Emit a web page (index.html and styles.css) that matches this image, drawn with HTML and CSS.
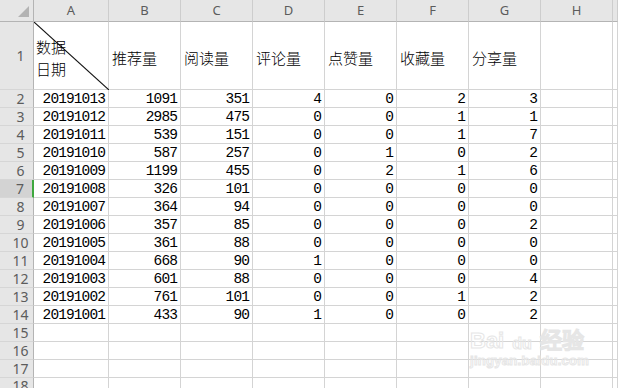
FILE: index.html
```html
<!DOCTYPE html>
<html lang="zh-CN">
<head>
<meta charset="utf-8">
<title>Sheet</title>
<link rel="stylesheet" href="styles.css">
</head>
<body>
<div class="sheet">
  <div class="corner"><span class="tri"></span></div>
  <div class="ch">A</div><div class="ch">B</div><div class="ch">C</div><div class="ch">D</div><div class="ch">E</div><div class="ch">F</div><div class="ch">G</div><div class="ch">H</div><div class="ch"></div>

  <div class="rh tall">1</div>
  <div class="c title diag">
    <svg class="diagline" viewBox="0 0 75 68" preserveAspectRatio="none"><line x1="0" y1="0" x2="75" y2="68" stroke="#111" stroke-width="1.1"/></svg>
    <span class="two">数据<br>日期</span>
  </div>
  <div class="c title">推荐量</div><div class="c title">阅读量</div><div class="c title">评论量</div><div class="c title">点赞量</div><div class="c title">收藏量</div><div class="c title">分享量</div><div class="c title"></div><div class="c title"></div>

  <div class="rh">2</div><div class="c n">20191013</div><div class="c n">1091</div><div class="c n">351</div><div class="c n">4</div><div class="c n">0</div><div class="c n">2</div><div class="c n">3</div><div class="c"></div><div class="c"></div>
  <div class="rh">3</div><div class="c n">20191012</div><div class="c n">2985</div><div class="c n">475</div><div class="c n">0</div><div class="c n">0</div><div class="c n">1</div><div class="c n">1</div><div class="c"></div><div class="c"></div>
  <div class="rh">4</div><div class="c n">20191011</div><div class="c n">539</div><div class="c n">151</div><div class="c n">0</div><div class="c n">0</div><div class="c n">1</div><div class="c n">7</div><div class="c"></div><div class="c"></div>
  <div class="rh">5</div><div class="c n">20191010</div><div class="c n">587</div><div class="c n">257</div><div class="c n">0</div><div class="c n">1</div><div class="c n">0</div><div class="c n">2</div><div class="c"></div><div class="c"></div>
  <div class="rh">6</div><div class="c n">20191009</div><div class="c n">1199</div><div class="c n">455</div><div class="c n">0</div><div class="c n">2</div><div class="c n">1</div><div class="c n">6</div><div class="c"></div><div class="c"></div>
  <div class="rh sel">7</div><div class="c n">20191008</div><div class="c n">326</div><div class="c n">101</div><div class="c n">0</div><div class="c n">0</div><div class="c n">0</div><div class="c n">0</div><div class="c"></div><div class="c"></div>
  <div class="rh">8</div><div class="c n">20191007</div><div class="c n">364</div><div class="c n">94</div><div class="c n">0</div><div class="c n">0</div><div class="c n">0</div><div class="c n">0</div><div class="c"></div><div class="c"></div>
  <div class="rh">9</div><div class="c n">20191006</div><div class="c n">357</div><div class="c n">85</div><div class="c n">0</div><div class="c n">0</div><div class="c n">0</div><div class="c n">2</div><div class="c"></div><div class="c"></div>
  <div class="rh">10</div><div class="c n">20191005</div><div class="c n">361</div><div class="c n">88</div><div class="c n">0</div><div class="c n">0</div><div class="c n">0</div><div class="c n">0</div><div class="c"></div><div class="c"></div>
  <div class="rh">11</div><div class="c n">20191004</div><div class="c n">668</div><div class="c n">90</div><div class="c n">1</div><div class="c n">0</div><div class="c n">0</div><div class="c n">0</div><div class="c"></div><div class="c"></div>
  <div class="rh">12</div><div class="c n">20191003</div><div class="c n">601</div><div class="c n">88</div><div class="c n">0</div><div class="c n">0</div><div class="c n">0</div><div class="c n">4</div><div class="c"></div><div class="c"></div>
  <div class="rh">13</div><div class="c n">20191002</div><div class="c n">761</div><div class="c n">101</div><div class="c n">0</div><div class="c n">0</div><div class="c n">1</div><div class="c n">2</div><div class="c"></div><div class="c"></div>
  <div class="rh">14</div><div class="c n">20191001</div><div class="c n">433</div><div class="c n">90</div><div class="c n">1</div><div class="c n">0</div><div class="c n">0</div><div class="c n">2</div><div class="c"></div><div class="c"></div>
  <div class="rh">15</div><div class="c"></div><div class="c"></div><div class="c"></div><div class="c"></div><div class="c"></div><div class="c"></div><div class="c"></div><div class="c"></div><div class="c"></div>
  <div class="rh">16</div><div class="c"></div><div class="c"></div><div class="c"></div><div class="c"></div><div class="c"></div><div class="c"></div><div class="c"></div><div class="c"></div><div class="c"></div>
  <div class="rh">17</div><div class="c"></div><div class="c"></div><div class="c"></div><div class="c"></div><div class="c"></div><div class="c"></div><div class="c"></div><div class="c"></div><div class="c"></div>
  <div class="rh cut">18</div><div class="c"></div><div class="c"></div><div class="c"></div><div class="c"></div><div class="c"></div><div class="c"></div><div class="c"></div><div class="c"></div><div class="c"></div>

  <div class="watermark">
    <div class="wm-top"><span>Bai</span><span class="paw">du</span><span>经验</span></div>
    <div class="wm-url">jingyan.baidu.com</div>
  </div>
</div>
</body>
</html>
```

FILE: styles.css
```css
html, body {
  margin: 0;
  padding: 0;
  background: #ffffff;
  overflow: hidden;
}

.sheet {
  position: relative;
  display: grid;
  grid-template-columns: 34px 75px repeat(7, 72px) 1fr;
  grid-template-rows: 22px 68px repeat(17, 18px);
  width: 618px;
  height: 388px;
  overflow: hidden;
  font-family: "Noto Sans CJK SC", "Noto Sans", sans-serif;
  font-size: 15px;
  color: #000;
}

.corner {
  position: relative;
  background: #e6e6e6;
  border-right: 1px solid #b4b4b4;
  border-bottom: 1px solid #b4b4b4;
  box-sizing: border-box;
}

.tri {
  position: absolute;
  right: 4px;
  bottom: 4px;
  width: 0;
  height: 0;
  border-left: 11px solid transparent;
  border-bottom: 11px solid #b3b3b3;
}

.ch {
  background: #e6e6e6;
  border-right: 1px solid #cdcdcd;
  border-bottom: 1px solid #b4b4b4;
  box-sizing: border-box;
  display: flex;
  align-items: center;
  justify-content: center;
  font-family: "Noto Sans", sans-serif;
  font-size: 13px;
  color: #5c5c5c;
  line-height: 1;
}

.rh {
  background: #e6e6e6;
  border-right: 1px solid #b4b4b4;
  border-bottom: 1px solid #d6d6d6;
  box-sizing: border-box;
  display: flex;
  align-items: center;
  justify-content: center;
  padding-left: 8px;
  font-family: "Noto Sans", sans-serif;
  font-size: 14px;
  color: #5c5c5c;
  line-height: 1;
}

.rh.cut {
  align-items: flex-start;
  padding-top: 1px;
}

.rh.sel {
  background: #d3d3d3;
  border-right: 2px solid #3fa83f;
}

.c {
  border-right: 1px solid #d4d4d4;
  border-bottom: 1px solid #d4d4d4;
  box-sizing: border-box;
  white-space: nowrap;
}

.title {
  display: flex;
  align-items: center;
  padding: 4px 0 0 3px;
  line-height: 1;
  font-weight: 300;
}

.diag {
  position: relative;
  padding-left: 2px;
}

.diagline {
  position: absolute;
  left: 0;
  top: 0;
  width: 75px;
  height: 68px;
}

.two {
  line-height: 22px;
  position: relative;
}

.n {
  display: flex;
  align-items: flex-end;
  justify-content: flex-end;
  padding-right: 3px;
  font-family: "Liberation Mono", "DejaVu Sans Mono", monospace;
  font-size: 14.5px;
  line-height: 16px;
  letter-spacing: -0.9px;
}

.watermark {
  position: absolute;
  left: 470px;
  top: 328px;
  width: 114px;
  color: transparent;
  -webkit-text-stroke: 1px #e6e6e6;
  font-family: "Liberation Sans", sans-serif;
  font-weight: bold;
  text-align: center;
}

.wm-top {
  display: flex;
  align-items: flex-end;
  justify-content: space-between;
  font-size: 22px;
  line-height: 26px;
}

.wm-top .paw {
  font-size: 16px;
  line-height: 20px;
}

.wm-url {
  font-size: 13px;
  line-height: 14px;
  letter-spacing: 0.3px;
}
```
